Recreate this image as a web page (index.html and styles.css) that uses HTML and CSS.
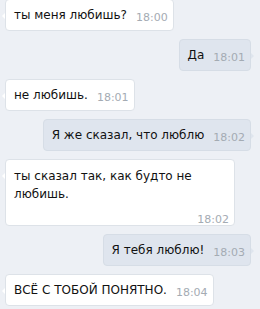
FILE: index.html
```html
<!DOCTYPE html>
<html lang="ru">
<head>
    <meta charset="UTF-8">
    <title>Диалог</title>
    <link rel="stylesheet" href="styles.css">
</head>
<body>
<div class="chat">
    <div class="msg in">
        <span class="text">ты меня любишь?</span><span class="time">18:00</span>
    </div>
    <div class="msg out">
        <span class="text">Да</span><span class="time">18:01</span>
    </div>
    <div class="msg in">
        <span class="text">не любишь.</span><span class="time">18:01</span>
    </div>
    <div class="msg out">
        <span class="text">Я же сказал, что люблю</span><span class="time">18:02</span>
    </div>
    <div class="msg in long">
        <span class="text">ты сказал так, как будто не любишь.</span><span class="time">18:02</span>
    </div>
    <div class="msg out">
        <span class="text">Я тебя люблю!</span><span class="time">18:03</span>
    </div>
    <div class="msg in">
        <span class="text">ВСЁ С ТОБОЙ ПОНЯТНО.</span><span class="time">18:04</span>
    </div>
</div>
</body>
</html>
```

FILE: styles.css
```css
body {
    margin: 0;
    background-color: #edf0f5;
    font-family: "DejaVu Sans", Verdana, sans-serif;
    font-size: 12px;
    color: #111;
}

.chat {
    display: flex;
    flex-direction: column;
    gap: 8px;
    margin-top: -1px;
    padding: 0 9px 0 5px;
}

.msg {
    position: relative;
    display: flex;
    align-items: baseline;
    gap: 9px;
    height: 32px;
    box-sizing: border-box;
    padding: 0 5px 0 8px;
    border-radius: 4px;
    line-height: 31px;
}

.msg.in {
    align-self: flex-start;
    background-color: #fff;
    border: 1px solid #dde2e8;
}

.msg.out {
    align-self: flex-end;
    background-color: #dfe5ee;
    border: 1px solid #d6dde6;
}

/* хвостик */
.msg::before {
    content: "";
    position: absolute;
    top: 13px;
    width: 0;
    height: 0;
    border-top: 3px solid transparent;
    border-bottom: 3px solid transparent;
}

.msg.in::before {
    left: -4px;
    border-right: 3px solid #fff;
}

.msg.out::before {
    right: -4px;
    border-left: 3px solid #dfe5ee;
}

.time {
    color: #a4abb3;
    font-size: 11px;
    position: relative;
    top: 2px;
}

.msg.long {
    display: block;
    width: 230px;
    height: 67px;
    line-height: 18px;
    padding-top: 7px;
}

.msg.long .text {
    display: block;
    padding-right: 20px;
}

.msg.long .time {
    display: block;
    text-align: right;
    margin-top: 6px;
}
```
